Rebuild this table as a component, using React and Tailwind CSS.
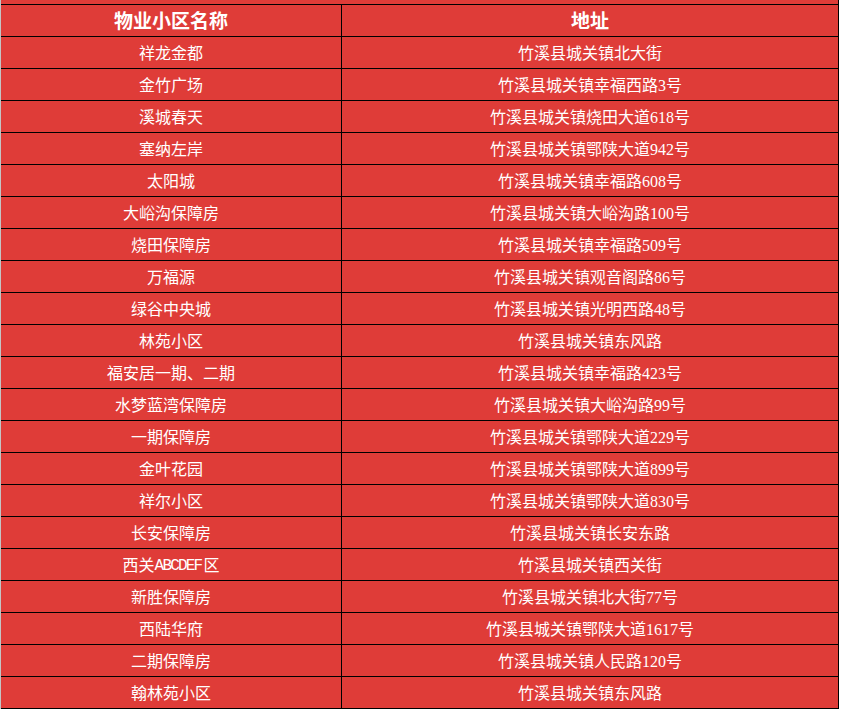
import React from 'react';

const rows = [
  ['祥龙金都', '竹溪县城关镇北大街'],
  ['金竹广场', '竹溪县城关镇幸福西路3号'],
  ['溪城春天', '竹溪县城关镇烧田大道618号'],
  ['塞纳左岸', '竹溪县城关镇鄂陕大道942号'],
  ['太阳城', '竹溪县城关镇幸福路608号'],
  ['大峪沟保障房', '竹溪县城关镇大峪沟路100号'],
  ['烧田保障房', '竹溪县城关镇幸福路509号'],
  ['万福源', '竹溪县城关镇观音阁路86号'],
  ['绿谷中央城', '竹溪县城关镇光明西路48号'],
  ['林苑小区', '竹溪县城关镇东风路'],
  ['福安居一期、二期', '竹溪县城关镇幸福路423号'],
  ['水梦蓝湾保障房', '竹溪县城关镇大峪沟路99号'],
  ['一期保障房', '竹溪县城关镇鄂陕大道229号'],
  ['金叶花园', '竹溪县城关镇鄂陕大道899号'],
  ['祥尔小区', '竹溪县城关镇鄂陕大道830号'],
  ['长安保障房', '竹溪县城关镇长安东路'],
  ['西关ABCDEF区', '竹溪县城关镇西关街'],
  ['新胜保障房', '竹溪县城关镇北大街77号'],
  ['西陆华府', '竹溪县城关镇鄂陕大道1617号'],
  ['二期保障房', '竹溪县城关镇人民路120号'],
  ['翰林苑小区', '竹溪县城关镇东风路'],
];

// 拉丁字母用等宽字体，模拟宋体半角宽度
function Cell({ text }) {
  const parts = text.split(/([A-Za-z]+)/);
  return (
    <>
      {parts.map((p, i) =>
        /^[A-Za-z]+$/.test(p) ? (
          <span key={i} className="font-['Liberation_Mono',monospace] tracking-[-1.8px] pr-[2px]">{p}</span>
        ) : (
          <span key={i}>{p}</span>
        )
      )}
    </>
  );
}

export default function App() {
  return (
    <div className="w-[842px] h-[711px] bg-white overflow-hidden font-['Liberation_Serif','Noto_Sans_CJK_SC',serif] text-white">
      <div className="w-[839px] border-l border-l-[#c4c4c4] border-r border-r-black bg-[#df3c38]">
        <div className="h-[5px] border-b border-black" />
        <div className="flex h-[32px] border-b border-black text-[19px] font-bold">
          <div className="w-[340px] flex items-center justify-center pt-[4px]">物业小区名称</div>
          <div className="flex-1 border-l border-black flex items-center justify-center pt-[4px]">地址</div>
        </div>
        {rows.map(([name, addr]) => (
          <div key={name} className="flex h-[32px] border-b border-black text-[16px]">
            <div className="w-[340px] flex items-center justify-center pt-[3px]">
              <Cell text={name} />
            </div>
            <div className="flex-1 border-l border-black flex items-center justify-center pt-[3px]">
              <Cell text={addr} />
            </div>
          </div>
        ))}
      </div>
    </div>
  );
}
